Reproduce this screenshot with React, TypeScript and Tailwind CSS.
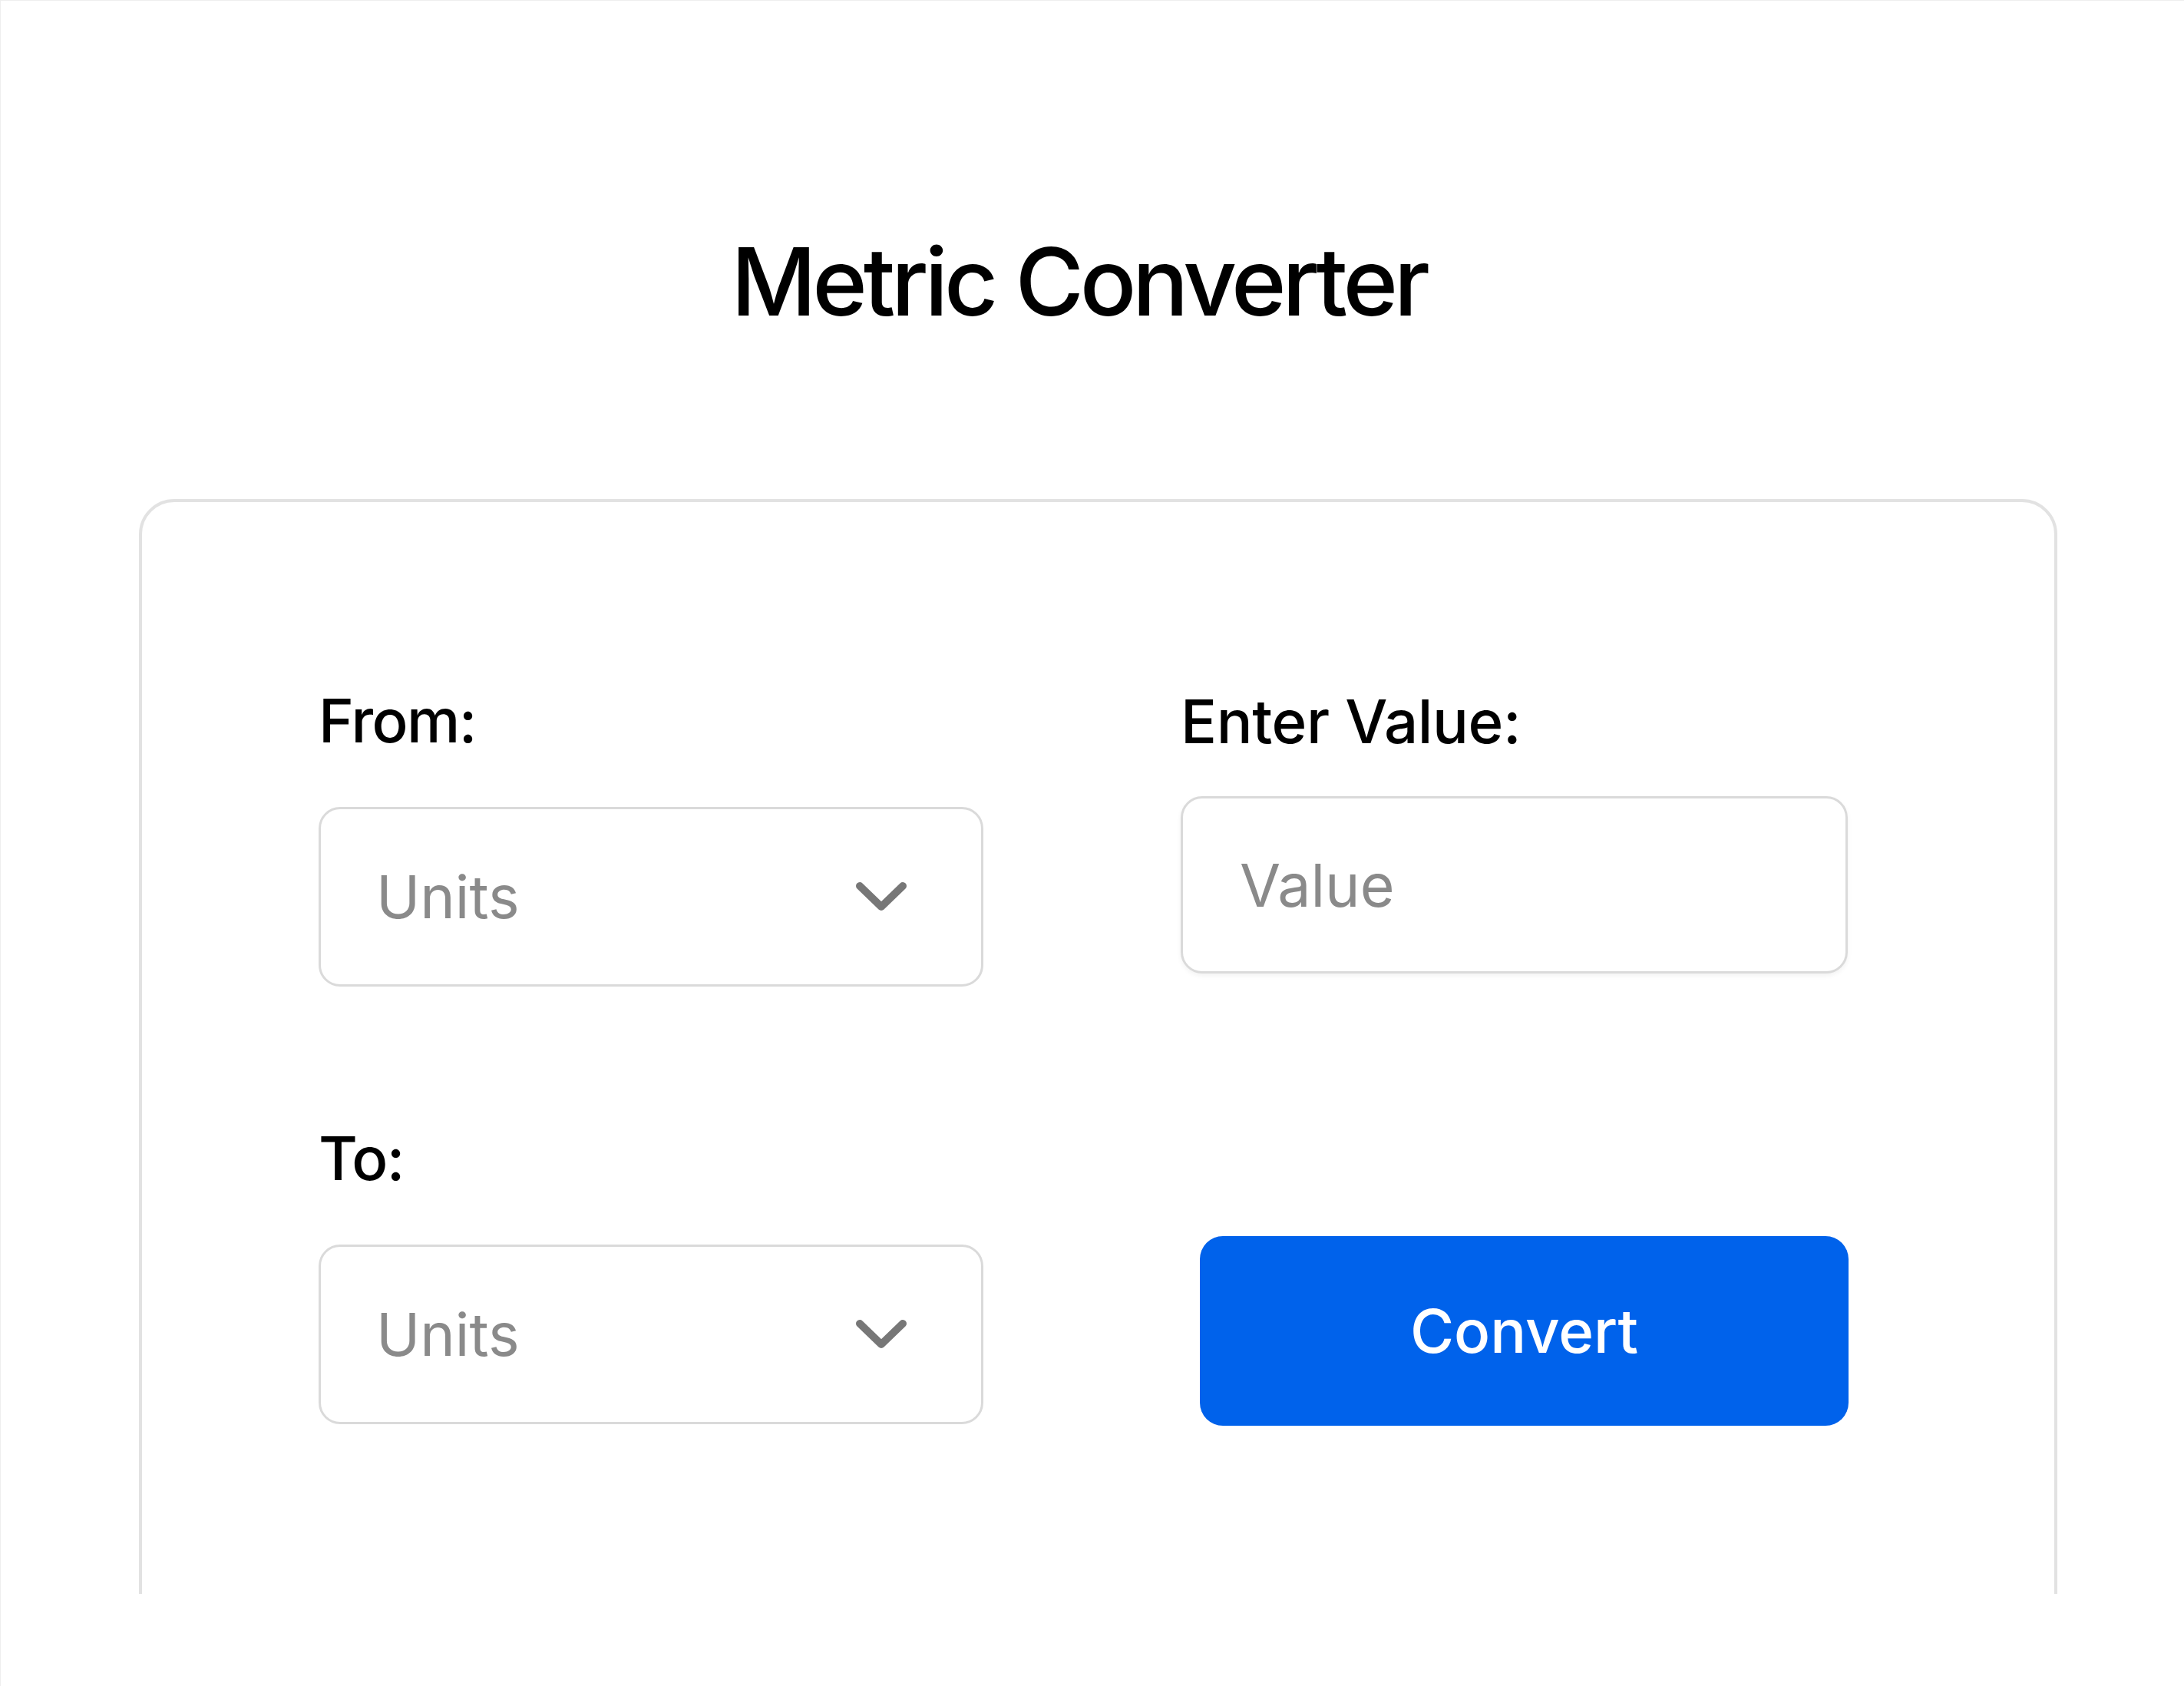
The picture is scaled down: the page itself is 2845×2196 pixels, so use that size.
import React from "react";

function Chevron() {
  return (
    <svg width="68" height="40" viewBox="0 0 68 40" fill="none" aria-hidden="true">
      <path d="M6 6 L34 33 L62 6" stroke="#777777" strokeWidth="10" strokeLinecap="round" strokeLinejoin="round" />
    </svg>
  );
}

function UnitSelect() {
  return (
    <div className="flex h-[234px] w-[866px] items-center justify-between rounded-[28px] border-[3px] border-[#dadada] bg-white pl-[72px] pr-[96px]">
      <span className="text-[77px] leading-none text-[#8a8a8a]">Units</span>
      <Chevron />
    </div>
  );
}

export default function App() {
  return (
    <div className="h-[2196px] w-full border-l border-t border-[#eeeeee] bg-white font-['Inter',sans-serif] text-black">
      <div className="h-[2075px] overflow-hidden">
        <div className="flex justify-center pt-[305px] pr-[36px]">
          <h1 className="text-[122px] font-medium leading-none tracking-[-0.043em]">Metric Converter</h1>
        </div>
        <div className="ml-[180px] mt-[222px] h-[1600px] w-[2499px] rounded-[46px] border-[4px] border-[#e2e2e2] bg-white pl-[230px] pt-[246px]">
          <div className="grid grid-cols-[866px_870px] gap-x-[257px] gap-y-[185px]">
            <div className="flex flex-col">
              <label className="text-[78px] font-medium leading-none tracking-[-0.02em]">From:</label>
              <div className="mt-[73px]">
                <UnitSelect />
              </div>
            </div>
            <div className="flex flex-col">
              <label className="mt-px text-[78px] font-medium leading-none tracking-[-0.005em]">Enter Value:</label>
              <input
                placeholder="Value"
                className="mt-[58px] h-[231px] w-[869px] rounded-[28px] border-[3px] border-[#dadada] bg-white pl-[74px] text-[77px] leading-none text-black shadow-[0_3px_6px_rgba(0,0,0,0.05)] outline-none placeholder:text-[#8a8a8a]"
              />
            </div>
            <div className="flex flex-col">
              <label className="text-[78px] font-medium leading-none tracking-[-0.02em]">To:</label>
              <div className="mt-[73px]">
                <UnitSelect />
              </div>
            </div>
            <div className="flex flex-col">
              <button className="ml-[25px] mt-[140px] h-[247px] w-[845px] rounded-[30px] bg-[#0062eb] text-[78px] font-medium leading-none text-white">
                Convert
              </button>
            </div>
          </div>
        </div>
      </div>
    </div>
  );
}
